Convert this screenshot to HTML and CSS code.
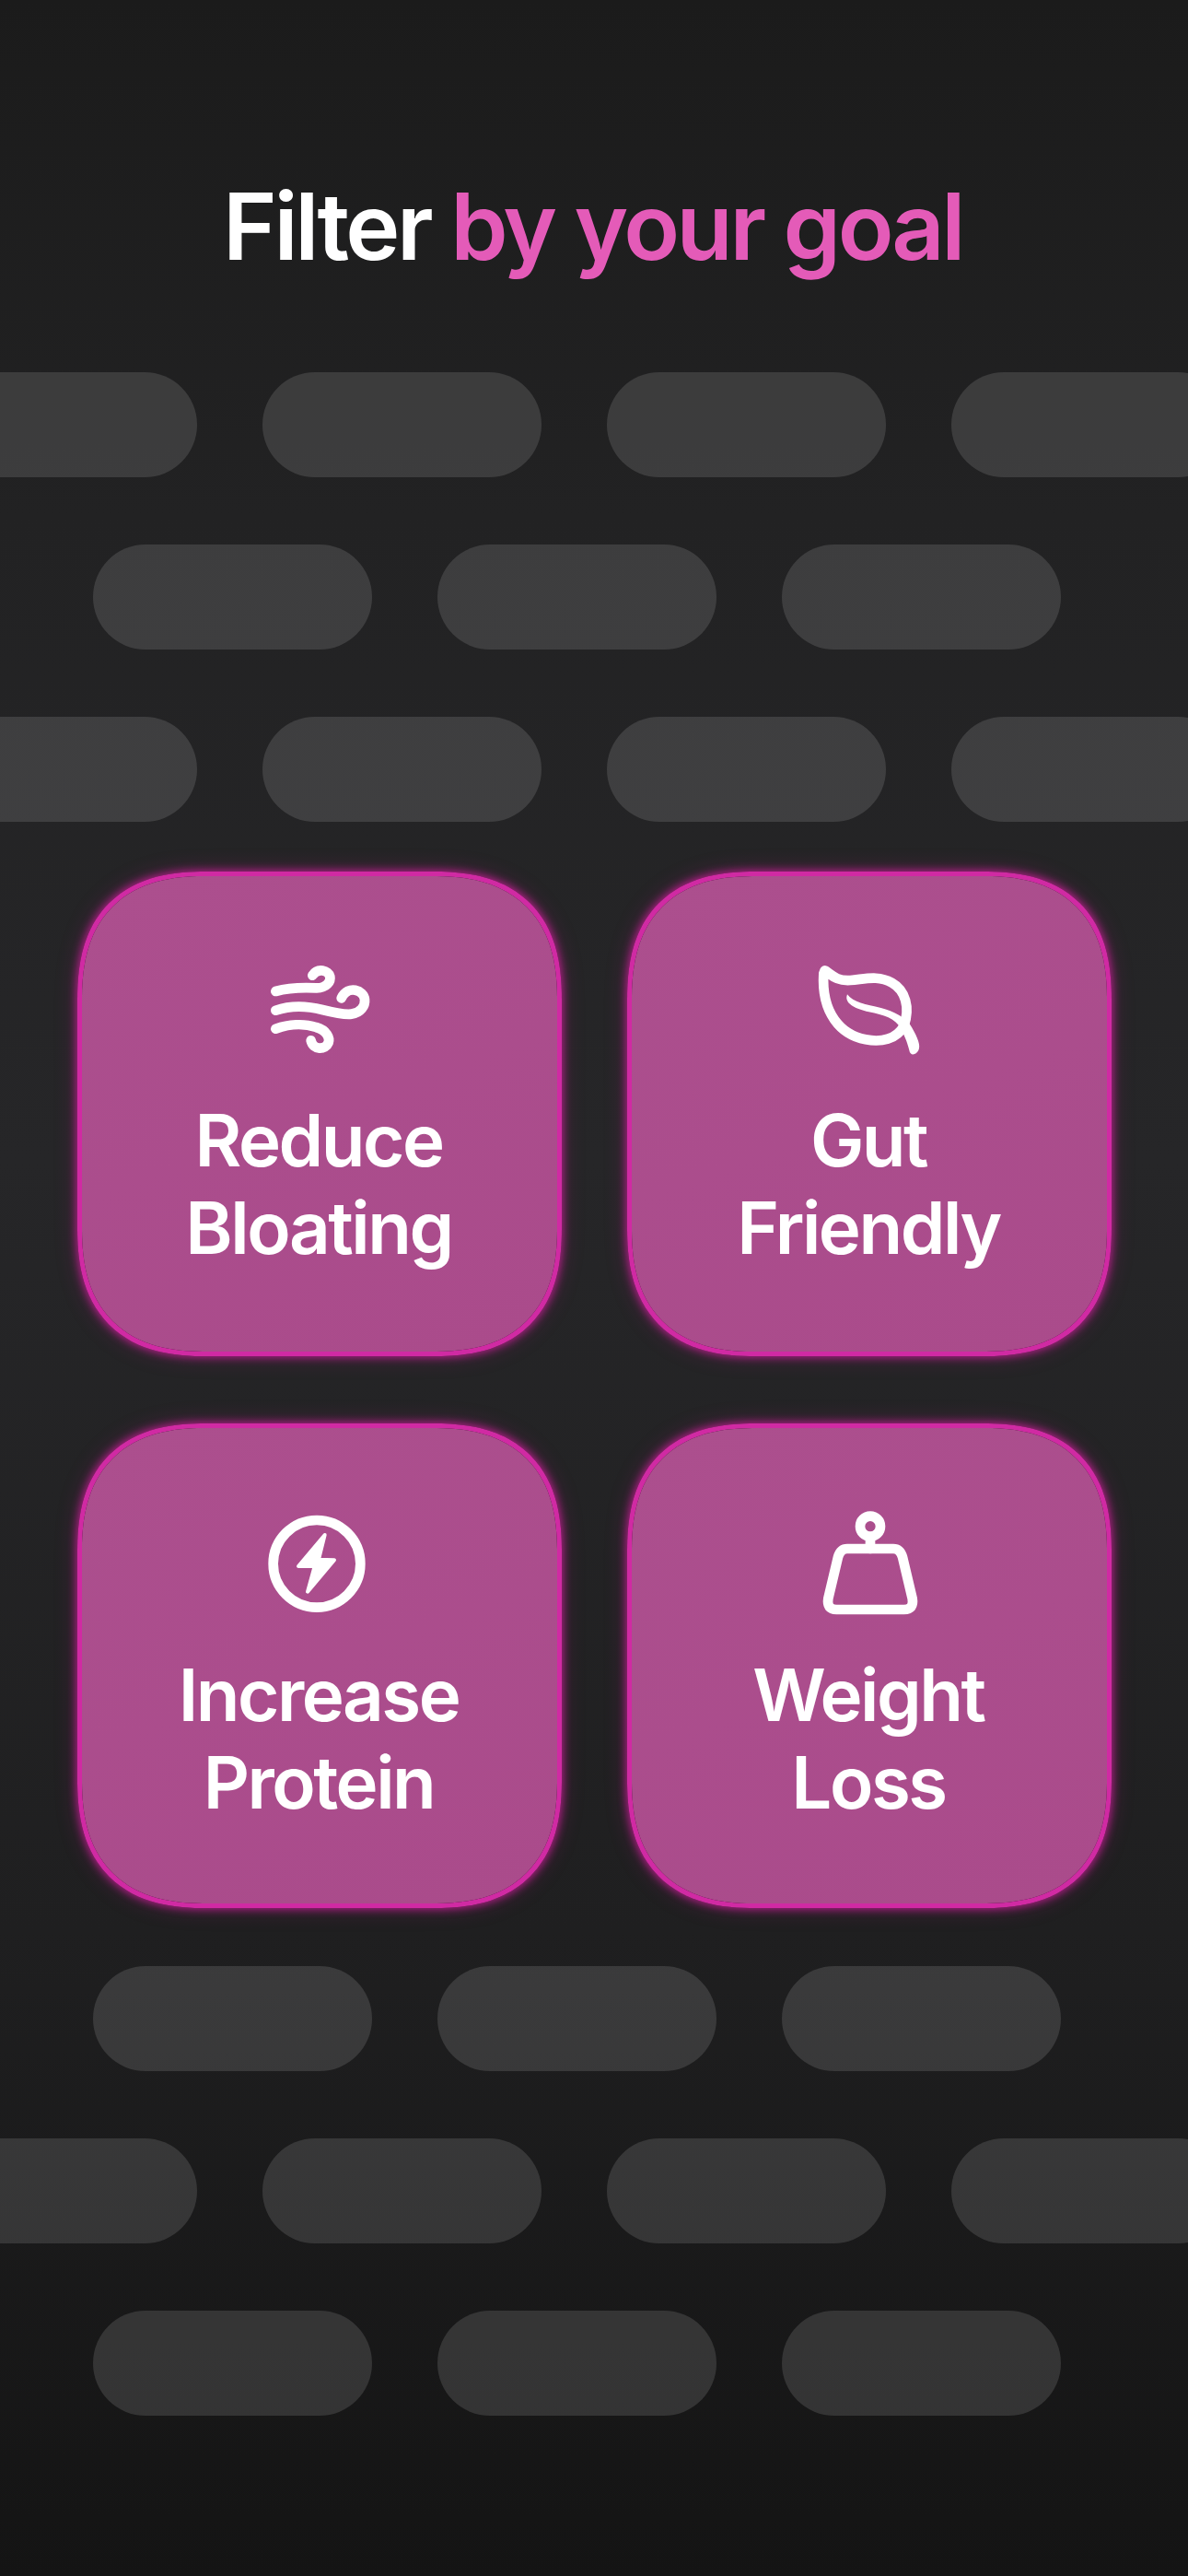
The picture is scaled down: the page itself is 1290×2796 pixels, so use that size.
FILE: index.html
```html
<!DOCTYPE html>
<html lang="en">
<head>
  <meta charset="UTF-8" />
  <meta name="viewport" content="width=device-width, initial-scale=1.0"/>
  <title>Filter by your goal</title>
  <link rel="stylesheet" href="styles.css">
</head>
<body>

  <h1>Filter <span class="accent">by your goal</span></h1>

  <div class="pills">
    <div class="pill-row offset-left"><i></i><i></i><i></i><i></i></div>
    <div class="pill-row offset-right"><i></i><i></i><i></i></div>
    <div class="pill-row offset-left"><i></i><i></i><i></i><i></i></div>
  </div>

  <div class="goals">
    <div class="goal">
      <svg class="icon" viewBox="141 48 360 360">
        <path d="M178 168C220 156 270 155 310 157C345 158 358 135 355 120C350 100 315 90 298 116"/>
        <path d="M178 230C230 212 280 215 330 228C370 238 400 245 425 242C455 238 470 215 468 195C465 165 415 145 392 190"/>
        <path d="M178 290C220 275 270 272 310 285C345 295 355 320 350 335C340 360 300 360 293 328"/>
      </svg>
      <div class="goal-name">Reduce<br>Bloating</div>
    </div>

    <div class="goal">
      <svg class="icon" viewBox="72 48 360 360">
        <path d="M107 100C130 115 145 135 190 132C240 128 280 115 325 140C370 165 385 220 365 280C340 325 290 335 240 325C160 310 95 240 103 110Z"/>
        <path class="solid" d="M180 178C200 205 240 210 290 222C330 232 375 255 390 285C410 320 420 345 412 360C405 375 385 380 382 360C375 330 365 310 355 290C335 255 300 245 250 235C210 225 175 210 178 185Z"/>
      </svg>
      <div class="goal-name">Gut<br>Friendly</div>
    </div>

    <div class="goal">
      <svg class="icon" viewBox="81 45 360 360">
        <circle cx="252" cy="232" r="142"/>
        <path class="bolt" d="M278 138L192 240L245 240L222 323L309 220L258 218Z"/>
      </svg>
      <div class="goal-name">Increase<br>Protein</div>
    </div>

    <div class="goal">
      <svg class="icon" viewBox="42 45 360 360">
        <circle cx="225" cy="110" r="33"/>
        <path d="M225 145V183"/>
        <path d="M150 183H300Q322 183 330 210L362 345Q368 381 335 381H115Q82 381 88 345L120 210Q128 183 150 183Z"/>
      </svg>
      <div class="goal-name">Weight<br>Loss</div>
    </div>
  </div>

  <div class="pills">
    <div class="pill-row offset-right"><i></i><i></i><i></i></div>
    <div class="pill-row offset-left"><i></i><i></i><i></i><i></i></div>
    <div class="pill-row offset-right"><i></i><i></i><i></i></div>
  </div>

</body>
</html>
```

FILE: styles.css
```css
:root {
  --accent: #e45bb8;
  --goal-border: #d02aa3;
  --pill-bg: rgba(255, 255, 255, 0.125);
}

html, body {
  margin: 0;
  height: 2796px;
  overflow: hidden;
}

body {
  font-family: Inter, "Liberation Sans", sans-serif;
  color: #fff;
  background: linear-gradient(180deg, #1b1b1b 0%, #222223 20%, #262628 45%, #1f1f20 75%, #141414 100%);
}

h1 {
  margin: 0;
  padding: 186px 3px 0 0;
  font-size: 100px;
  line-height: 120px;
  font-weight: 600;
  letter-spacing: -0.034em;
  text-align: center;
}

.accent {
  color: var(--accent);
}

.pills {
  display: flex;
  flex-direction: column;
  gap: 73px;
}

h1 + .pills {
  margin-top: 98px;
}

.pill-row {
  display: flex;
  gap: 71px;
}

.pill-row i {
  flex: 0 0 303px;
  height: 114px;
  border-radius: 57px;
  background-color: var(--pill-bg);
}

.offset-left {
  margin-left: -89px;
}

.offset-right {
  margin-left: 101px;
}

.goals {
  display: grid;
  grid-template-columns: 526px 526px;
  column-gap: 71px;
  row-gap: 73px;
  margin: 54px 0 63px 84px;
}

.goal {
  box-sizing: border-box;
  height: 526px;
  padding-top: 85px;
  display: flex;
  flex-direction: column;
  align-items: center;
  border: 5px solid var(--goal-border);
  border-radius: 140px;
  corner-shape: superellipse(1.3);
  background: linear-gradient(160deg, #ac4f8e, #aa4b8b) padding-box;
  box-shadow: 0 0 10px 1px rgba(214, 30, 160, 0.8), 0 0 24px rgba(214, 30, 160, 0.25);
}

.icon {
  width: 120px;
  height: 120px;
  flex: none;
  fill: none;
  stroke: #fff;
  stroke-width: 32;
  stroke-linecap: round;
  stroke-linejoin: round;
}

.icon .solid {
  fill: #fff;
  stroke: none;
}

.icon .bolt {
  fill: #fff;
  stroke-width: 12;
}

.goal-name {
  margin-top: 34px;
  margin-right: 2px;
  font-size: 78px;
  line-height: 95px;
  font-weight: 600;
  letter-spacing: -0.032em;
  text-align: center;
}

.goal:nth-child(n+3) .goal-name {
  margin-top: 37px;
}
```
